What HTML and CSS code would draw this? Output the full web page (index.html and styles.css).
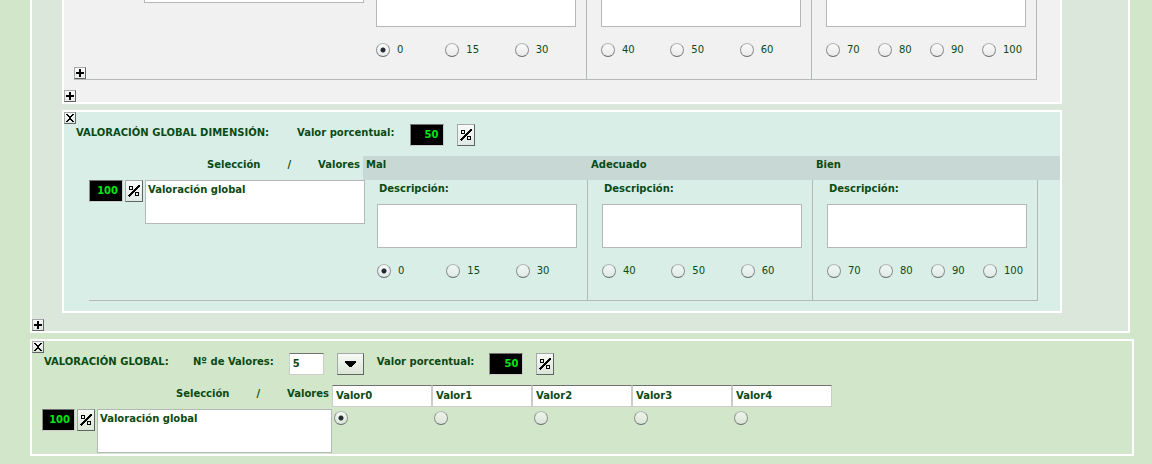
FILE: index.html
```html
<!DOCTYPE html>
<html lang="es">
<head>
<meta charset="utf-8">
<title>Valoración</title>
<link rel="stylesheet" href="styles.css">
</head>
<body>
<svg class="defs" aria-hidden="true">
  <symbol id="pct" viewBox="0 0 12 12"><path d="M11.5 .5L.5 11.5" stroke="#000" stroke-width="1.6"/><path d="M1.5 1.5h3v3h-3zM7.5 7.5h3v3h-3z" fill="none" stroke="#000"/></symbol>
  <symbol id="plus" viewBox="0 0 8 8"><path d="M3 0h2v3h3v2H5v3H3V5H0V3h3z"/></symbol>
  <symbol id="cross" viewBox="0 0 8 8"><path d="M0 0h2v1h1v1h2V1h1V0h2v1H7v1H6v1H5v2h1v1h1v1h1v1H6V7H5V6H3v1H2v1H0V7h1V6h1V5h1V3H2V2H1V1H0z"/></symbol>
</svg>
<main class="page">
  <section class="panel dimension">
    <section class="panel subdimension">
      <table class="scale attributes">
        <colgroup><col class="c-name-wide"><col class="c-level"><col class="c-level"><col class="c-level"></colgroup>
        <tbody><tr>
          <td class="name-cell">
            <div class="name-stack">
              <textarea class="area name-area cut-name" aria-label="Atributo"></textarea>
              <button class="mini" aria-label="Añadir atributo"><svg><use href="#plus"/></svg></button>
            </div>
          </td>
          <td class="level">
            <textarea class="area desc cut-desc" aria-label="Descripción Mal"></textarea>
            <div class="radios"><label><input type="radio" name="a" checked>0</label><label><input type="radio" name="a">15</label><label><input type="radio" name="a">30</label></div>
          </td>
          <td class="level">
            <textarea class="area desc cut-desc" aria-label="Descripción Adecuado"></textarea>
            <div class="radios"><label><input type="radio" name="a">40</label><label><input type="radio" name="a">50</label><label><input type="radio" name="a">60</label></div>
          </td>
          <td class="level">
            <textarea class="area desc cut-desc" aria-label="Descripción Bien"></textarea>
            <div class="radios"><label><input type="radio" name="a">70</label><label><input type="radio" name="a">80</label><label><input type="radio" name="a">90</label><label><input type="radio" name="a">100</label></div>
          </td>
        </tr></tbody>
      </table>
      <button class="mini" aria-label="Añadir subdimensión"><svg><use href="#plus"/></svg></button>
    </section>

    <section class="panel dim-global">
      <button class="mini" aria-label="Eliminar valoración de la dimensión"><svg><use href="#cross"/></svg></button>
      <div class="bar">
        <h2 class="long">VALORACIÓN GLOBAL DIMENSIÓN:</h2>
        <label class="field">Valor porcentual: <input class="num" type="text" value="50"></label>
        <button class="pct" aria-label="Porcentaje"><svg><use href="#pct"/></svg></button>
      </div>
      <table class="scale levels">
        <colgroup><col class="c-name"><col class="c-level"><col class="c-level"><col class="c-level"><col></colgroup>
        <thead><tr>
          <th class="corner"><div class="axes"><span>Selección</span><span>/</span><span>Valores</span></div></th>
          <th class="shade">Mal</th><th class="shade">Adecuado</th><th class="shade">Bien</th><td class="shade"></td>
        </tr></thead>
        <tbody><tr>
          <td class="name-cell ruled">
            <div class="name-row">
              <input class="num" type="text" value="100" aria-label="Peso">
              <button class="pct" aria-label="Porcentaje"><svg><use href="#pct"/></svg></button>
              <textarea class="area name-area" aria-label="Nombre">Valoración global</textarea>
            </div>
          </td>
          <td class="level ruled">
            <label class="caption" for="d1">Descripción:</label>
            <textarea class="area desc" id="d1"></textarea>
            <div class="radios"><label><input type="radio" name="b" checked>0</label><label><input type="radio" name="b">15</label><label><input type="radio" name="b">30</label></div>
          </td>
          <td class="level ruled">
            <label class="caption" for="d2">Descripción:</label>
            <textarea class="area desc" id="d2"></textarea>
            <div class="radios"><label><input type="radio" name="b">40</label><label><input type="radio" name="b">50</label><label><input type="radio" name="b">60</label></div>
          </td>
          <td class="level ruled">
            <label class="caption" for="d3">Descripción:</label>
            <textarea class="area desc" id="d3"></textarea>
            <div class="radios"><label><input type="radio" name="b">70</label><label><input type="radio" name="b">80</label><label><input type="radio" name="b">90</label><label><input type="radio" name="b">100</label></div>
          </td>
          <td></td>
        </tr></tbody>
      </table>
    </section>
    <button class="mini" aria-label="Añadir dimensión"><svg><use href="#plus"/></svg></button>
  </section>

  <section class="panel global">
    <button class="mini" aria-label="Eliminar valoración global"><svg><use href="#cross"/></svg></button>
    <div class="bar">
      <h2 class="short">VALORACIÓN GLOBAL:</h2>
      <label class="field">Nº de Valores: <input class="count" type="text" value="5"></label>
      <button class="drop" aria-label="Aplicar número de valores"><svg viewBox="0 0 10 5"><path d="M0 0h10v1L6 5H4L0 1z"/></svg></button>
      <label class="field">Valor porcentual: <input class="num" type="text" value="50"></label>
      <button class="pct" aria-label="Porcentaje"><svg><use href="#pct"/></svg></button>
    </div>
    <table class="scale values">
      <colgroup><col class="c-total"><col class="c-value"><col class="c-value"><col class="c-value"><col class="c-value"><col class="c-value"></colgroup>
      <thead><tr>
        <th class="corner"><div class="axes"><span>Selección</span><span>/</span><span>Valores</span></div></th>
        <th><input class="value" type="text" value="Valor0" aria-label="Valor 0"></th>
        <th><input class="value" type="text" value="Valor1" aria-label="Valor 1"></th>
        <th><input class="value" type="text" value="Valor2" aria-label="Valor 2"></th>
        <th><input class="value" type="text" value="Valor3" aria-label="Valor 3"></th>
        <th><input class="value" type="text" value="Valor4" aria-label="Valor 4"></th>
      </tr></thead>
      <tbody><tr>
        <td class="name-cell">
          <div class="name-row">
            <input class="num" type="text" value="100" aria-label="Peso total">
            <button class="pct" aria-label="Porcentaje"><svg><use href="#pct"/></svg></button>
            <textarea class="area name-area" aria-label="Nombre total">Valoración global</textarea>
          </div>
        </td>
        <td class="pick"><input type="radio" name="c" aria-label="Valor0" checked></td>
        <td class="pick"><input type="radio" name="c" aria-label="Valor1"></td>
        <td class="pick"><input type="radio" name="c" aria-label="Valor2"></td>
        <td class="pick"><input type="radio" name="c" aria-label="Valor3"></td>
        <td class="pick"><input type="radio" name="c" aria-label="Valor4"></td>
      </tr></tbody>
    </table>
  </section>
</main>
</body>
</html>
```
FILE: styles.css
```css
* { box-sizing: border-box; }

body {
  margin: 0;
  background: #d2e6ca;
  color: #0a4a14;
  font: 10px/18px Verdana, "DejaVu Sans", sans-serif;
}

input, textarea, button {
  margin: 0;
  color: inherit;
  font: inherit;
}

.defs { display: none; }

.page { padding: 0 18px 8px 30px; }

.panel { border: 2px solid #fff; }

.dimension {
  margin: 0 4px 6px 0;
  padding-left: 30px;
  border-top: 0;
  background: #dce7dc;
}

.subdimension {
  margin: 0 66px 6px 0;
  border-top: 0;
  background: #f1f1f1;
}

.dim-global {
  margin: 0 66px 6px 0;
  padding-bottom: 10px;
  background: #daeee8;
}

.dimension > .mini { margin-left: -30px; }

.global { padding-bottom: 1px; }

/* Buttons */
.mini, .pct, .drop {
  display: flex;
  align-items: center;
  justify-content: center;
  flex: none;
  padding: 0;
  border: 1px solid;
  border-color: #a4a8a8 #606464 #606464 #a4a8a8;
  background: linear-gradient(#fffc, #e4e4e480);
}

.mini svg, .pct svg, .drop svg { shape-rendering: crispEdges; }
.mini { width: 12px; height: 12px; }
.mini svg { width: 8px; height: 8px; }
.pct { width: 18px; height: 22px; }
.pct svg { width: 12px; height: 12px; }
.drop { width: 27px; height: 22px; }
.drop svg { width: 11px; height: 6px; }

/* Heading bar of a panel */
.bar {
  display: flex;
  gap: 13px;
  margin-left: 12px;
}

.bar h2 {
  margin: 0 4px 0 0;
  font-size: 10px;
  line-height: 18px;
}

.bar .long { min-width: 204px; }
.bar .short { min-width: 132px; }

.field {
  display: flex;
  gap: 15px;
  font-weight: bold;
}

.num, .count, .value {
  height: 22px;
  border: 1px solid #ccc;
  border-top-color: #707070;
  padding: 0 3px 2px;
  background: #fff;
  font-weight: bold;
}

.num {
  flex: none;
  width: 34px;
  padding: 0 4px 2px;
  border-left-color: #8c8c8c;
  background: #000;
  color: #00e616;
  text-align: right;
}

.count { width: 35px; }
.value { display: block; width: 100%; }

/* Tables */
.scale {
  table-layout: fixed;
  border-collapse: separate;
  border-spacing: 0;
}

.scale th, .scale td {
  padding: 0;
  text-align: left;
  vertical-align: top;
}

.attributes { width: 963px; margin: 0 0 10px 10px; }
.levels { width: calc(100% - 25px); margin: 10px 0 0 25px; }
.values { width: 790px; margin: 10px 0 0 10px; }

.c-name { width: 274px; }
.c-name-wide { width: 288px; }
.c-level { width: 225px; }
.c-total { width: 290px; }
.c-value { width: 100px; }

.axes {
  display: flex;
  justify-content: flex-end;
  gap: 27px;
  padding-right: 3px;
}

.scale .shade {
  height: 24px;
  padding-left: 3px;
  background: #c8d9d5;
}

.area {
  display: block;
  flex: none;
  border: 1px solid #b4b8b8;
  padding: 0 2px;
  background: #fff;
  font-weight: bold;
  resize: none;
  overflow: hidden;
}

.name-row { display: flex; gap: 2px; }
.name-area { width: 220px; height: 44px; }
.values .name-area { width: 235px; }
.values .num { width: 33px; }
.values .name-row { padding-top: 2px; }

.name-stack {
  display: flex;
  flex-direction: column;
  justify-content: space-between;
  width: 290px;
  height: 79px;
}

.cut-name {
  align-self: flex-end;
  height: 3px;
  border-top: 0;
}

.scale .level {
  padding: 0 2px 22px 14px;
  border-right: 1px solid #b4b8b8;
}

.attributes td, .scale .ruled { border-bottom: 1px solid #b4b8b8; }

.caption {
  display: block;
  height: 24px;
  padding-left: 2px;
  font-weight: bold;
}

.desc { width: 200px; height: 44px; }
.desc.cut-desc { height: 27px; border-top: 0; }

.radios {
  display: flex;
  height: 14px;
  margin-top: 16px;
}

.radios label {
  display: flex;
  flex: 1;
  gap: 7px;
  line-height: 14px;
}

input[type="radio"] {
  appearance: none;
  flex: none;
  display: block;
  width: 14px;
  height: 14px;
  border: 1px solid;
  border-color: #b4b8b8 #8c9090 #686c6c #8c9090;
  border-radius: 50%;
  background: linear-gradient(#fff9, #e4e4e480);
}

input[type="radio"]:checked {
  background: radial-gradient(circle, #222c36 0 2px, #0000 3px), linear-gradient(#fffc, #e4e4e480);
}

.values .pick { padding: 4px 0 0 2px; }
```
